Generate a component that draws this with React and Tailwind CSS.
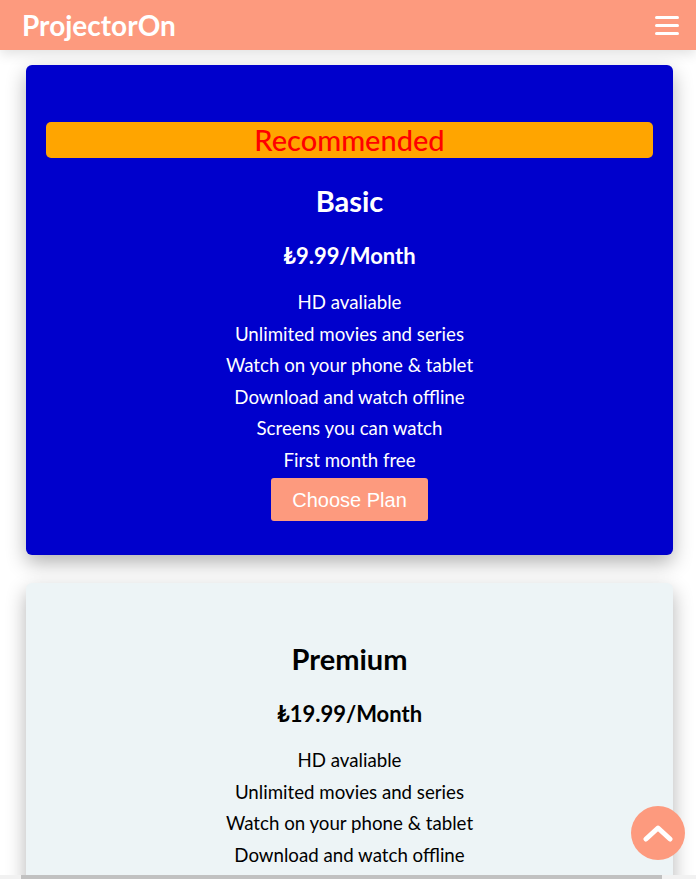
import { useState } from "react";

const features = [
  "HD avaliable",
  "Unlimited movies and series",
  "Watch on your phone & tablet",
  "Download and watch offline",
  "Screens you can watch",
  "First month free",
];

const PlanCard = ({ name, price, recommended }) => {
  const dark = recommended;
  return (
    <div
      className={`w-[647px] ml-[26px] rounded-[6px] px-5 pt-[57px] pb-[34px] text-center shadow-[0_8px_20px_rgba(0,0,0,0.3)] ${
        dark ? "bg-[#0000cc] text-white" : "bg-[#edf4f6] text-black"
      }`}
    >
      {recommended && (
        <div className="h-9 mb-6 rounded-[5px] bg-[#ffa500] text-[#ff0000] text-[29px] font-medium leading-9">
          Recommended
        </div>
      )}
      <h2 className="text-[29px] font-bold leading-[37px]">{name}</h2>
      <p className="mt-[23px] text-[22px] font-bold leading-7">{price}</p>
      <ul className="mt-[17px]">
        {features.map((f) => (
          <li key={f} className="text-[18.7px] leading-[31.5px]">
            {f}
          </li>
        ))}
      </ul>
      <button className="mt-0.5 w-[157px] h-[43px] rounded-[3px] bg-[#fd9a7e] text-white text-[20px] font-['Liberation_Sans',Arial,sans-serif]">
        Choose Plan
      </button>
    </div>
  );
};

export default function App() {
  const [open, setOpen] = useState(false);

  return (
    <div className="relative h-[879px] overflow-hidden bg-white font-['Lato',sans-serif]">
      {/* Navbar */}
      <nav className="relative z-10 h-[50px] bg-[#fd9a7e] flex items-center justify-between pl-[22px] pr-[17px] shadow-[0_4px_12px_rgba(0,0,0,0.12)]">
        <span className="text-white text-[28px] font-bold">ProjectorOn</span>
        <button onClick={() => setOpen(!open)} className="flex flex-col gap-[5px] py-1">
          <span className="block w-6 h-[3px] rounded-full bg-white" />
          <span className="block w-6 h-[3px] rounded-full bg-white" />
          <span className="block w-6 h-[3px] rounded-full bg-white" />
        </button>
      </nav>

      {/* Plans */}
      <div className="pt-[15px] flex flex-col gap-7">
        <PlanCard name="Basic" price="₺9.99/Month" recommended />
        <PlanCard name="Premium" price="₺19.99/Month" />
      </div>

      {/* Scroll to top */}
      <button className="absolute left-[631px] top-[806px] w-[54px] h-[54px] rounded-full bg-[#fd9a7e] flex items-center justify-center">
        <svg width="30" height="18" viewBox="0 0 30 18" fill="none">
          <path
            d="M3 15 L15 4 L27 15"
            stroke="white"
            strokeWidth="5"
            strokeLinecap="round"
            strokeLinejoin="round"
          />
        </svg>
      </button>

      {/* Horizontal scrollbar */}
      <div className="absolute left-0 right-0 bottom-0 h-[4px] bg-[#f1f1f1]">
        <div className="ml-[21px] w-[641px] h-full bg-[#c1c1c1]" />
      </div>
    </div>
  );
}
